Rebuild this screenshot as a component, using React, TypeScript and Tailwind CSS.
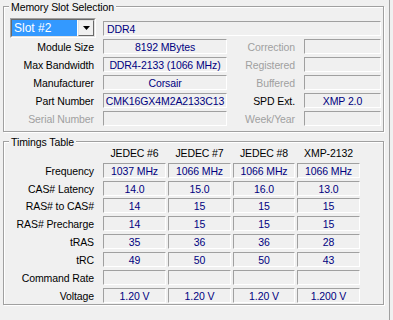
import React from "react";

type BoxProps = { children?: React.ReactNode; className?: string };

function Box({ children, className = "" }: BoxProps) {
  return (
    <div
      className={
        "h-[15px] border border-t-[#a0a0a0] border-l-[#a0a0a0] border-b-white border-r-white flex items-center justify-center text-[#000080] whitespace-nowrap overflow-hidden leading-none pt-[1px] " +
        className
      }
    >
      {children}
    </div>
  );
}

function Group({
  title,
  className = "",
  children,
}: {
  title: string;
  className?: string;
  children?: React.ReactNode;
}) {
  return (
    <div
      className={
        "relative ml-[3px] w-[381px] border border-[#a0a0a0] shadow-[inset_1px_1px_0_#fff,1px_1px_0_#fff] " +
        className
      }
    >
      <span className="absolute left-[5px] top-[-6px] px-[2px] bg-[#f0f0f0] leading-[13px] text-black">
        {title}
      </span>
      {children}
    </div>
  );
}

function Label({ children, gray = false, className = "" }: { children?: React.ReactNode; gray?: boolean; className?: string }) {
  return (
    <div
      className={
        "text-right whitespace-nowrap leading-none flex items-center justify-end pt-[2px] " +
        (gray ? "text-[#a0a0a0] " : "text-black ") +
        className
      }
    >
      {children}
    </div>
  );
}

const slotRows: { l: string; lg?: boolean; v: string; r: string; rg?: boolean; rv: string }[] = [
  { l: "Module Size", v: "8192 MBytes", r: "Correction", rg: true, rv: "" },
  { l: "Max Bandwidth", v: "DDR4-2133 (1066 MHz)", r: "Registered", rg: true, rv: "" },
  { l: "Manufacturer", v: "Corsair", r: "Buffered", rg: true, rv: "" },
  { l: "Part Number", v: "CMK16GX4M2A2133C13", r: "SPD Ext.", rv: "XMP 2.0" },
  { l: "Serial Number", lg: true, v: "", r: "Week/Year", rg: true, rv: "" },
];

const timingRows: { l: string; v: string[]; mt: string }[] = [
  { l: "Frequency", v: ["1037 MHz", "1066 MHz", "1066 MHz", "1066 MHz"], mt: "mt-[3px]" },
  { l: "CAS# Latency", v: ["14.0", "15.0", "16.0", "13.0"], mt: "mt-[3px]" },
  { l: "RAS# to CAS#", v: ["14", "15", "15", "15"], mt: "mt-[2px]" },
  { l: "RAS# Precharge", v: ["14", "15", "15", "15"], mt: "mt-[3px]" },
  { l: "tRAS", v: ["35", "36", "36", "28"], mt: "mt-[3px]" },
  { l: "tRC", v: ["49", "50", "50", "43"], mt: "mt-[3px]" },
  { l: "Command Rate", v: ["", "", "", ""], mt: "mt-[3px]" },
  { l: "Voltage", v: ["1.20 V", "1.20 V", "1.20 V", "1.200 V"], mt: "mt-[3px]" },
];

const colW = ["w-[63px]", "w-[63px] ml-[2px]", "w-[62px] ml-[2px]", "w-[63px] ml-[2px]"];
const headers = ["JEDEC #6", "JEDEC #7", "JEDEC #8", "XMP-2132"];

export default function App() {
  return (
    <div className="w-[393px] h-[320px] bg-[#f0f0f0] overflow-hidden text-[10.5px] tracking-[-0.1px] font-['Liberation_Sans',Arial,sans-serif] text-black">
      <div className="w-[390px] h-full border-r border-[#a0a0a0] pt-[6px]">
        <Group title="Memory Slot Selection" className="h-[126px]">
          {/* Row 1: combo + type */}
          <div className="flex items-start mt-[11px] pl-[6px]">
            <div className="w-[86px] h-[20px] border border-t-[#a0a0a0] border-l-[#a0a0a0] border-b-white border-r-white">
              <div className="w-full h-full border border-t-[#696969] border-l-[#696969] border-b-[#e3e3e3] border-r-[#e3e3e3] bg-white flex">
                <div className="flex-1 bg-[#3399ff] text-white text-[12px] tracking-normal leading-none flex items-center pl-[2px]">
                  Slot #2
                </div>
                <div className="w-[16px] ml-[1px] border border-t-[#e3e3e3] border-l-[#e3e3e3] border-b-[#696969] border-r-[#696969] bg-[#f0f0f0] flex items-center justify-center">
                  <svg width="7" height="4" viewBox="0 0 7 4">
                    <path d="M0 0H7L3.5 4Z" fill="#000" />
                  </svg>
                </div>
              </div>
            </div>
            <Box className="ml-[7px] mt-[3px] w-[278px] !justify-start pl-[3px]">DDR4</Box>
          </div>
          {slotRows.map((r, i) => (
            <div key={r.l} className={"flex h-[15px] pl-[6px] " + (i === 0 ? "mt-[1px]" : "mt-[3px]")}>
              <Label gray={r.lg} className="w-[84px]">
                {r.l}
              </Label>
              <Box className="ml-[9px] w-[124px]">{r.v}</Box>
              <Label gray={r.rg} className="w-[68px]">
                {r.r}
              </Label>
              <Box className="ml-[9px] w-[77px]">{r.rv}</Box>
            </div>
          ))}
        </Group>

        <Group title="Timings Table" className="mt-[9px] h-[164px]">
          <div className="flex h-[15px] mt-[3px] pl-[6px]">
            <div className="w-[84px]" />
            <div className="flex ml-[9px]">
              {headers.map((h, i) => (
                <div key={h} className={"flex items-center justify-center leading-none whitespace-nowrap pt-[1px] " + colW[i]}>
                  {h}
                </div>
              ))}
            </div>
          </div>
          {timingRows.map((r) => (
            <div key={r.l} className={"flex h-[15px] pl-[6px] " + r.mt}>
              <Label className="w-[84px]">{r.l}</Label>
              <div className="flex ml-[9px]">
                {r.v.map((v, i) => (
                  <Box key={i} className={colW[i]}>
                    {v}
                  </Box>
                ))}
              </div>
            </div>
          ))}
        </Group>
      </div>
    </div>
  );
}
